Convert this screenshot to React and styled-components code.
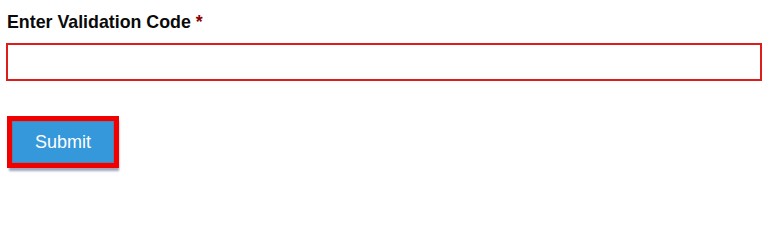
import React from "react";
import styled, { createGlobalStyle } from "styled-components";

const Global = createGlobalStyle`
  html, body { margin: 0; padding: 0; background: #fff; }
  body { font-family: "Liberation Sans", Arial, sans-serif; min-height: 206px; }
`;

const Form = styled.form`
  display: flex;
  flex-direction: column;
  align-items: flex-start;
  padding: 12px 0 30px 6px;
  width: 756px;
`;

const Label = styled.label`
  font-size: 17.8px;
  font-weight: bold;
  line-height: 20px;
  color: #0a0a0a;
  padding-left: 1px;
  margin-bottom: 11px;
`;

const Required = styled.span`
  color: #8b0000;
`;

const Input = styled.input`
  box-sizing: border-box;
  width: 756px;
  height: 38px;
  border: 2px solid #dd1c1c;
  outline: none;
  background: #fff;
  font: 16px "Liberation Sans", Arial, sans-serif;
  padding: 0 8px;
  margin: 0 0 40px 0;
`;

const Button = styled.button`
  box-sizing: border-box;
  margin-left: 6px;
  width: 102px;
  height: 42px;
  background: #3498db;
  color: #fff;
  border: 1px solid #5a7fa8;
  box-shadow: 0 0 0 5px #f20000, 1px 4px 2px 4px rgba(70, 80, 120, 0.5);
  font: 18px "Liberation Sans", Arial, sans-serif;
  padding: 0;
  cursor: pointer;
`;

export default function App() {
  return (
    <>
      <Global />
      <Form onSubmit={(e) => e.preventDefault()}>
        <Label htmlFor="code">
          Enter Validation Code <Required>*</Required>
        </Label>
        <Input id="code" type="text" />
        <Button type="submit">Submit</Button>
      </Form>
    </>
  );
}
